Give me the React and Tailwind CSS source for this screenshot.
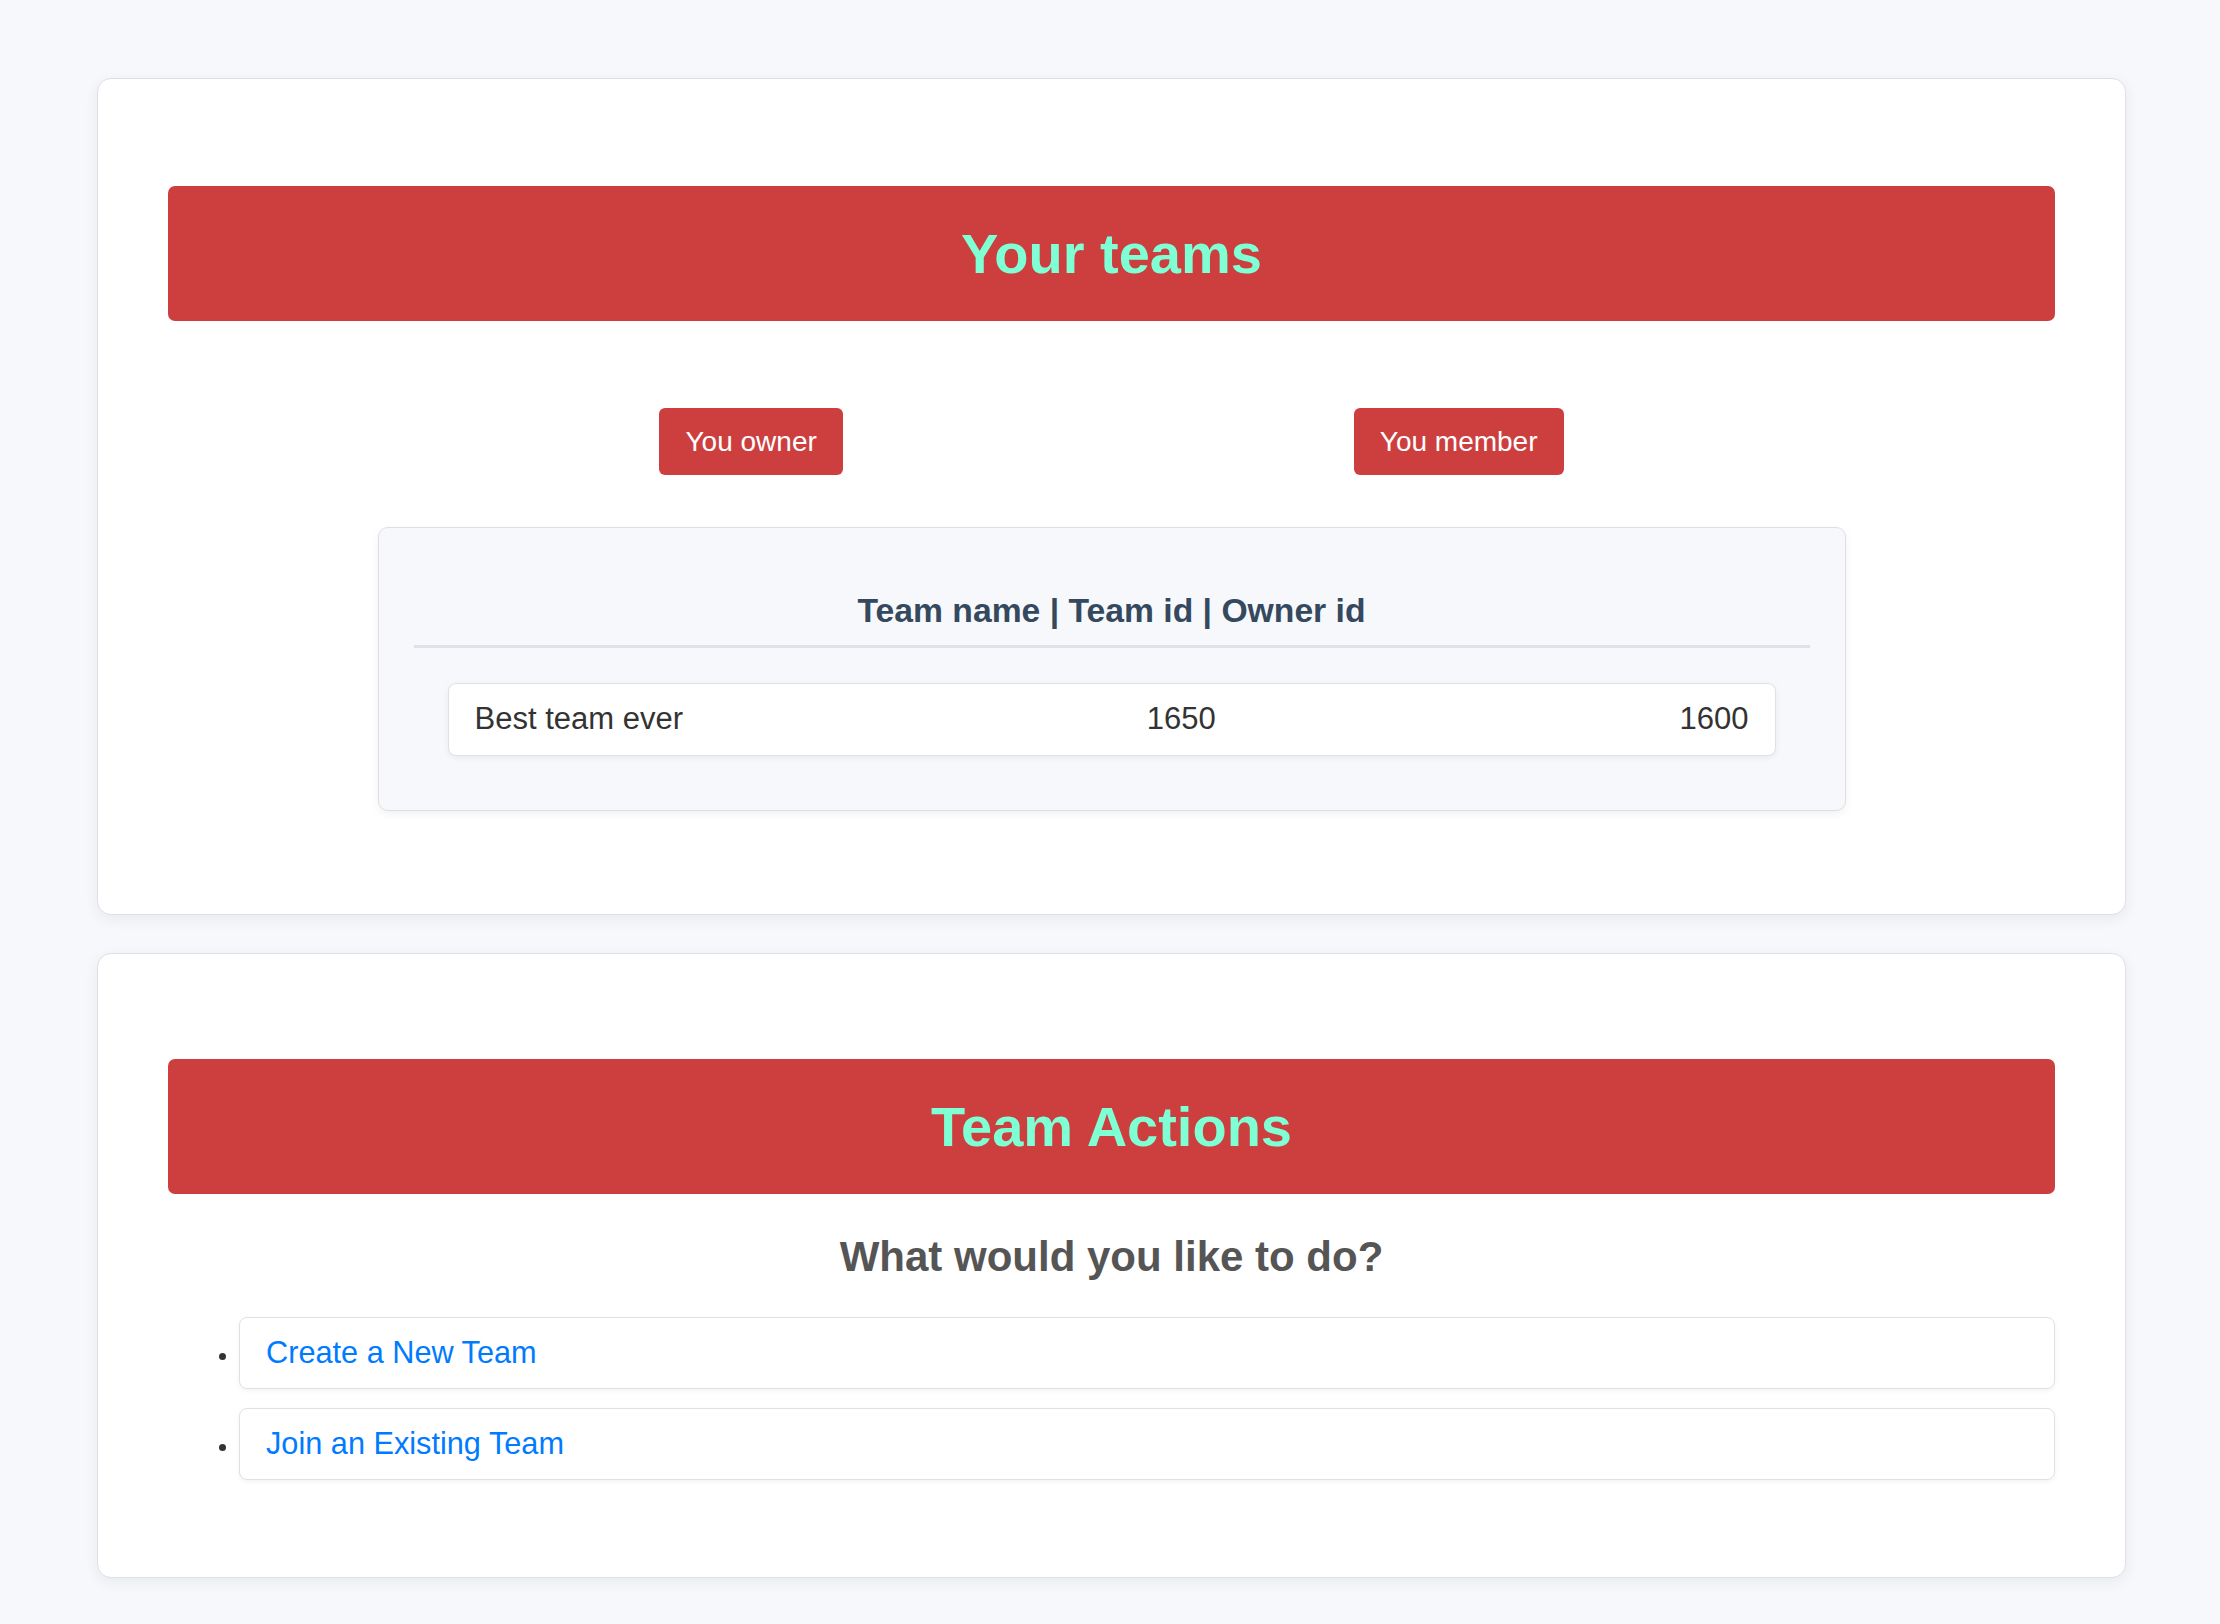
import React from "react";

const teams = [{ name: "Best team ever", id: 1650, owner: 1600 }];

const actions = [
  { label: "Create a New Team", href: "#create" },
  { label: "Join an Existing Team", href: "#join" },
];

const Banner = ({ children }) => (
  <div className="h-[135px] rounded-[7px] bg-[#cd3f3f] flex items-center justify-center">
    <h1 className="text-[56px] font-bold text-[#7fffd4] leading-none">{children}</h1>
  </div>
);

const Card = ({ children, className = "" }) => (
  <div
    className={`ml-[97px] w-[2029px] bg-white border border-[#dde0e6] rounded-[14px] shadow-[0_4px_14px_rgba(30,40,80,0.07)] px-[70px] ${className}`}
  >
    {children}
  </div>
);

export default function App() {
  return (
    <div
      className="min-h-screen bg-[#f7f8fb] pt-[78px] pb-[47px]"
      style={{ fontFamily: '"Liberation Sans", Arial, sans-serif' }}
    >
      {/* Your teams */}
      <Card className="pt-[107px] pb-[103px]">
        <Banner>Your teams</Banner>

        <div className="mt-[87px] flex justify-center gap-[511px]">
          <button className="h-[67px] px-[26px] rounded-[6px] bg-[#cd3f3f] text-white text-[28px] leading-none">
            You owner
          </button>
          <button className="h-[67px] px-[26px] rounded-[6px] bg-[#cd3f3f] text-white text-[28px] leading-none">
            You member
          </button>
        </div>

        <div className="mt-[52px] mx-auto w-[1468px] bg-[#f7f8fb] border border-[#dedfe3] rounded-[10px] shadow-[0_3px_8px_rgba(0,0,0,0.06)] px-[35px] pt-[63px] pb-[54px]">
          <h3 className="text-[33.7px] leading-[38px] font-bold text-[#34495e] text-center pb-[16px] border-b-[3px] border-[#dfe1e6]">
            Team name | Team id | Owner id
          </h3>
          <div className="mt-[35px] mx-[34px] flex flex-col gap-4">
            {teams.map((t) => (
              <div
                key={t.id}
                className="h-[73px] px-[26px] bg-white border border-[#dfe1e6] rounded-[8px] shadow-[0_2px_6px_rgba(0,0,0,0.06)] flex items-center justify-between text-[31px] text-[#333333]"
              >
                <span>{t.name}</span>
                <span>{t.id}</span>
                <span>{t.owner}</span>
              </div>
            ))}
          </div>
        </div>
      </Card>

      {/* Team Actions */}
      <Card className="mt-[38px] pt-[105px] pb-[97px]">
        <Banner>Team Actions</Banner>

        <h2 className="mt-[39px] text-[42px] leading-[48px] font-bold text-[#555555] text-center">
          What would you like to do?
        </h2>

        <ul className="mt-[36px] pl-[71px] list-disc flex flex-col gap-[19px] text-[#333333]">
          {actions.map((a) => (
            <li
              key={a.label}
              className="h-[72px] pl-[26px] pr-[19px] bg-white border border-[#dfe1e6] rounded-[8px] shadow-[0_2px_5px_rgba(0,0,0,0.05)] text-[30.7px] marker:text-[22px]"
              style={{ display: "list-item", lineHeight: "70px" }}
            >
              <a href={a.href} className="text-[#007bff]">
                {a.label}
              </a>
            </li>
          ))}
        </ul>
      </Card>
    </div>
  );
}
